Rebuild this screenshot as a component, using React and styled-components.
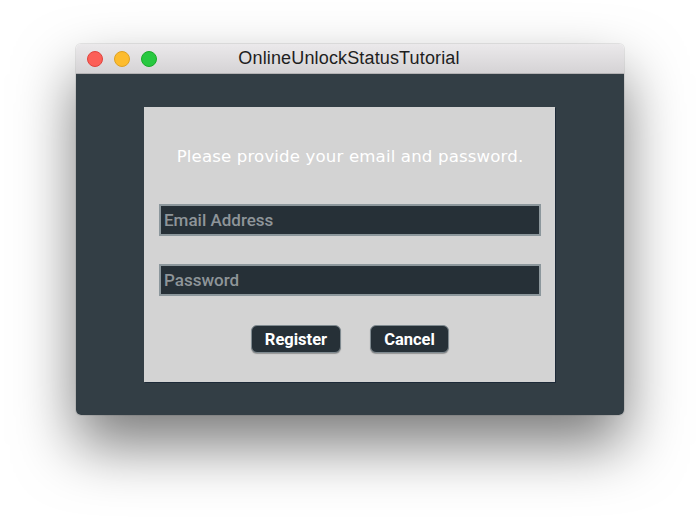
import React from "react";
import styled, { createGlobalStyle } from "styled-components";

const GlobalStyle = createGlobalStyle`
  html, body {
    margin: 0;
    padding: 0;
    background: #ffffff;
  }
  body {
    width: 700px;
    height: 525px;
    overflow: hidden;
  }
`;

const Stage = styled.div`
  width: 700px;
  height: 525px;
  padding: 44px 0 0 76px;
  box-sizing: border-box;
`;

const Window = styled.div`
  width: 548px;
  height: 371px;
  display: flex;
  flex-direction: column;
  border-radius: 5px;
  overflow: hidden;
  box-shadow: 0 30px 60px rgba(0, 0, 0, 0.52), 0 0 0 1px rgba(0, 0, 0, 0.08);
`;

const TitleBar = styled.div`
  height: 29px;
  flex: none;
  position: relative;
  display: flex;
  align-items: center;
  justify-content: center;
  background: linear-gradient(#ebe9eb, #d5d3d5);
  border-bottom: 1px solid #b4b2b4;
`;

const Lights = styled.div`
  position: absolute;
  left: 11px;
  top: 7px;
  display: flex;
  gap: 11px;
`;

const Light = styled.span`
  width: 16px;
  height: 16px;
  border-radius: 50%;
  box-sizing: border-box;
  background: ${(p) => p.$color};
  border: 1px solid ${(p) => p.$edge};
`;

const Title = styled.div`
  font-family: "Liberation Sans", Arial, sans-serif;
  font-size: 18px;
  color: #1e1e1e;
  letter-spacing: 0.15px;
  margin-left: -2px;
`;

const Body = styled.div`
  flex: 1;
  background: #333e45;
  padding: 33px 69px 33px 68px;
  display: flex;
`;

const Panel = styled.div`
  flex: 1;
  background: #d3d3d3;
  box-shadow: 1px 1px 0 #1d2a38;
  padding: 0 14px 0 15px;
  display: flex;
  flex-direction: column;
  font-family: "DejaVu Sans", Verdana, sans-serif;
`;

const Prompt = styled.div`
  margin-top: 39px;
  height: 22px;
  line-height: 22px;
  text-align: center;
  color: #ffffff;
  font-size: 16.6px;
  letter-spacing: 0.15px;
`;

const Field = styled.input`
  height: 32px;
  box-sizing: border-box;
  margin-top: ${(p) => p.$gap}px;
  background: #263037;
  border: 2px solid #8c979c;
  padding: 0 3px;
  font-family: Roboto, "DejaVu Sans", sans-serif;
  font-weight: 500;
  font-size: 17px;
  color: #ffffff;
  outline: none;

  &::placeholder {
    color: #8e9599;
  }
`;

const Actions = styled.div`
  margin-top: 29px;
  display: flex;
  justify-content: center;
  gap: 29px;
`;

const Button = styled.button`
  height: 28px;
  width: ${(p) => p.$w}px;
  box-sizing: border-box;
  background: #263037;
  border: 1px solid #7f8a90;
  border-radius: 6px;
  color: #ffffff;
  font-family: Roboto, "DejaVu Sans", sans-serif;
  font-weight: 700;
  font-size: 16.5px;
  padding: 0;
  box-shadow: 0 1px 1px rgba(0, 0, 0, 0.3);
`;

export default function App() {
  return (
    <>
      <GlobalStyle />
      <Stage>
        <Window>
          <TitleBar>
            <Lights>
              <Light $color="#fc5f57" $edge="#e0443e" />
              <Light $color="#fdbc2e" $edge="#dea123" />
              <Light $color="#28c840" $edge="#1aab29" />
            </Lights>
            <Title>OnlineUnlockStatusTutorial</Title>
          </TitleBar>
          <Body>
            <Panel>
              <Prompt>Please provide your email and password.</Prompt>
              <Field $gap={36} placeholder="Email Address" />
              <Field $gap={28} type="password" placeholder="Password" />
              <Actions>
                <Button $w={90}>Register</Button>
                <Button $w={79}>Cancel</Button>
              </Actions>
            </Panel>
          </Body>
        </Window>
      </Stage>
    </>
  );
}
